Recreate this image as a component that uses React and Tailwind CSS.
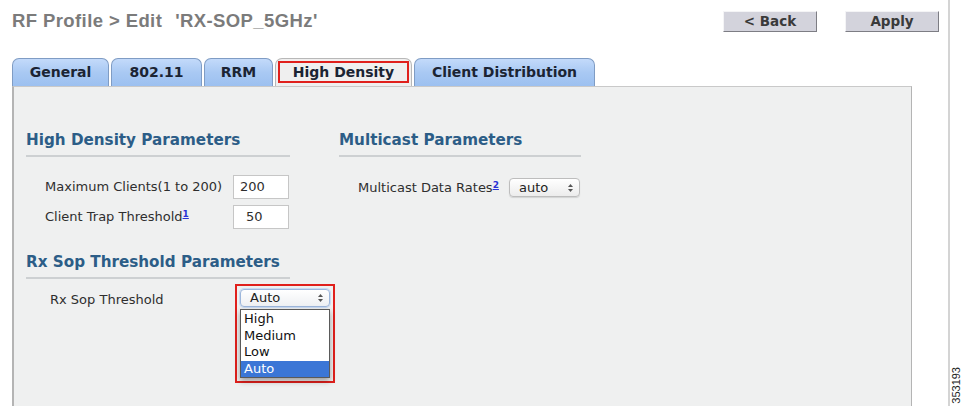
import React from "react";

const verdana = { fontFamily: '"DejaVu Sans", Verdana, sans-serif' };

function Tab({ label, width, active }) {
  if (active) {
    return (
      <div
        className={`h-[28px] ${width} rounded-t-[7px] border border-b-0 border-[#b8b8b8] bg-[#efefef] p-[2px] pb-[3px]`}
      >
        <div className="flex h-full items-center justify-center border-2 border-[#e0201c] text-[14px] font-bold text-[#1b2433]">
          {label}
        </div>
      </div>
    );
  }
  return (
    <div
      className={`flex h-[28px] ${width} items-center justify-center rounded-t-[7px] border border-b-0 border-[#7f9cc4] bg-gradient-to-b from-[#c3dafa] via-[#a9c9f3] to-[#9cc0f0] text-[14px] font-bold text-[#1b2433]`}
    >
      {label}
    </div>
  );
}

function SectionHeading({ children, width }) {
  return (
    <div className={width}>
      <div className="text-[15.2px] font-bold leading-[18px] text-[#2c5d87]">{children}</div>
      <div className="mt-[6px] h-[2px] bg-[#cdd0d2]" />
    </div>
  );
}

function UpDown() {
  return (
    <svg width="7" height="10" viewBox="0 0 7 10" className="shrink-0">
      <path d="M1 4 L3.5 1 L6 4 Z" fill="#555" />
      <path d="M1 6 L3.5 9 L6 6 Z" fill="#555" />
    </svg>
  );
}

export default function App() {
  return (
    <div className="flex h-[406px] w-[961px] overflow-hidden bg-white" style={verdana}>
      {/* main column */}
      <div className="flex w-[951px] flex-col border-r-2 border-[#d4d4d4]">
        {/* header */}
        <div className="flex h-[58px] items-start justify-between pl-[12px] pr-[9px]">
          <div
            className="mt-[7px] flex gap-[13px] text-[18.5px] font-bold tracking-[0.4px] text-[#7b7b7b]"
            style={{ fontFamily: '"Liberation Sans", Arial, sans-serif' }}
          >
            <span>RF Profile &gt; Edit</span>
            <span>'RX-SOP_5GHz'</span>
          </div>
          <div className="mt-[11px] flex gap-[28px]">
            <button className="flex h-[21px] w-[94px] items-center justify-center border border-[#f4f4f6] border-b-[#7d7d84] border-r-[#7d7d84] bg-[#d3d3dc] text-[13.5px] font-bold text-[#3a3a3a]">
              &lt; Back
            </button>
            <button className="flex h-[21px] w-[94px] items-center justify-center border border-[#f4f4f6] border-b-[#7d7d84] border-r-[#7d7d84] bg-[#d3d3dc] text-[13.5px] font-bold text-[#3a3a3a]">
              Apply
            </button>
          </div>
        </div>

        {/* tabs */}
        <div className="flex items-end gap-[2px] pl-[12px]">
          <Tab label="General" width="w-[97px]" />
          <Tab label="802.11" width="w-[91px]" />
          <Tab label="RRM" width="w-[69px]" />
          <Tab label="High Density" width="w-[137px]" active />
          <Tab label="Client Distribution" width="w-[181px]" />
        </div>

        {/* panel */}
        <div className="ml-[12px] flex w-[900px] flex-1 gap-[49px] border-l-2 border-r border-t border-[#b4b4b4] border-t-[#c9c9c9] bg-[#eff0f0] pl-[12px] pt-[44px]">
          {/* left column */}
          <div className="flex w-[264px] shrink-0 flex-col">
            <SectionHeading width="w-[264px]">High Density Parameters</SectionHeading>
            <div className="mt-[18px] flex flex-col gap-[6px] text-[13px] text-[#2e2e2e]">
              <div className="flex items-center">
                <span className="w-[207px] shrink-0 pl-[19px]">Maximum Clients(1 to 200)</span>
                <div className="flex h-[24px] w-[56px] shrink-0 items-center border border-[#c6c6c6] bg-white pl-[6px]">
                  200
                </div>
              </div>
              <div className="flex items-center">
                <span className="w-[207px] shrink-0 pl-[19px]">
                  Client Trap Threshold
                  <sup className="text-[9px] font-bold text-[#2a33d6] underline">1</sup>
                </span>
                <div className="flex h-[24px] w-[56px] shrink-0 items-center border border-[#c6c6c6] bg-white pl-[12px]">
                  50
                </div>
              </div>
            </div>

            <div className="mt-[24px]">
              <SectionHeading width="w-[264px]">Rx Sop Threshold Parameters</SectionHeading>
            </div>

            <div className="mt-[5px] flex items-start text-[13px] text-[#2e2e2e]">
              <span className="mt-[6px] w-[209px] shrink-0 pl-[24px]">Rx Sop Threshold</span>
              <div className="w-[100px] shrink-0 border-2 border-[#e0201c] p-[3px]">
                <div className="flex h-[18px] items-center justify-between rounded-[4px] border border-[#9db7dc] bg-gradient-to-b from-white to-[#eef0f3] pl-[9px] pr-[5px] text-[13px] text-[#222] shadow-[0_0_0_1px_#c9dbf3]">
                  <span>Auto</span>
                  <UpDown />
                </div>
                <div className="mt-[2px] flex flex-col border border-[#5a5a5a] bg-white text-[13px] leading-[16.5px] text-[#111] shadow-[0_3px_6px_rgba(0,0,0,0.35)]">
                  <span className="pl-[3px] pt-[1px]">High</span>
                  <span className="pl-[3px]">Medium</span>
                  <span className="pl-[3px]">Low</span>
                  <span className="bg-[#3b76d6] pl-[3px] text-white">Auto</span>
                </div>
              </div>
            </div>
          </div>

          {/* right column */}
          <div className="flex w-[242px] flex-col">
            <SectionHeading width="w-[242px]">Multicast Parameters</SectionHeading>
            <div className="mt-[21px] flex items-center text-[13px] text-[#2e2e2e]">
              <span className="w-[170px] shrink-0 pl-[19px]">
                Multicast Data Rates
                <sup className="text-[9px] font-bold text-[#2a33d6] underline">2</sup>
              </span>
              <div className="flex h-[19px] w-[71px] shrink-0 items-center justify-between rounded-[4px] border border-[#bdbdbd] bg-gradient-to-b from-white to-[#ececec] pl-[9px] pr-[5px] text-[13px] text-[#222] shadow-[0_1px_1px_rgba(0,0,0,0.12)]">
                <span>auto</span>
                <UpDown />
              </div>
            </div>
          </div>
        </div>
      </div>

      {/* figure number */}
      <div className="flex flex-1 flex-col justify-end pb-[2px] pl-[1px]">
        <span
          className="rotate-180 text-[11px] leading-[10px] text-[#222] [writing-mode:vertical-rl]"
          style={{ fontFamily: '"Liberation Sans", Arial, sans-serif' }}
        >
          353193
        </span>
      </div>
    </div>
  );
}
